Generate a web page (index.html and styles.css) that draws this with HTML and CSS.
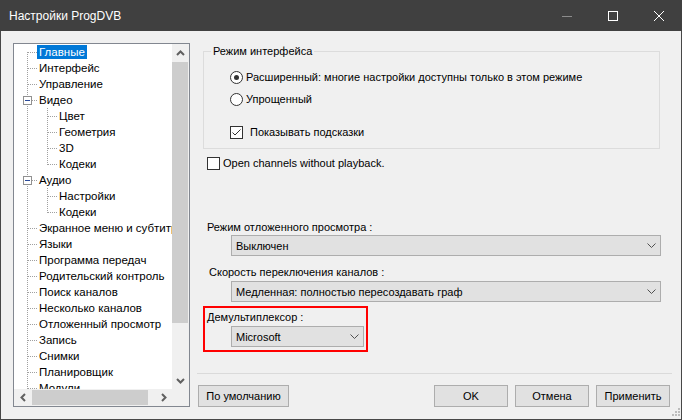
FILE: index.html
```html
<!DOCTYPE html>
<html lang="ru">
<head>
    <meta charset="UTF-8">
    <title>Настройки ProgDVB</title>
    <link rel="stylesheet" href="styles.css">
</head>
<body>
    <div class="window">
        <div class="titlebar">
            <span class="title">Настройки ProgDVB</span>
            <div class="caption-buttons">
                <span class="cap cap-min"><svg width="10" height="10" viewBox="0 0 10 10"><path d="M0 5.5H10" stroke="#8c8c8c" stroke-width="1"/></svg></span>
                <span class="cap"><svg width="10" height="10" viewBox="0 0 10 10"><rect x="0.5" y="0.5" width="9" height="9" fill="none" stroke="#fff" stroke-width="1"/></svg></span>
                <span class="cap"><svg width="10" height="10" viewBox="0 0 10 10"><path d="M0 0L10 10M10 0L0 10" stroke="#fff" stroke-width="1"/></svg></span>
            </div>
        </div>

        <div class="client">
            <div class="tree-view">
                <div class="tree-items">
                    <div class="node"><span class="c c-first"></span><span class="label selected">Главные</span></div>
                    <div class="node"><span class="c c-mid"></span><span class="label">Интерфейс</span></div>
                    <div class="node"><span class="c c-mid"></span><span class="label">Управление</span></div>
                    <div class="node"><span class="c c-mid"><span class="expander"><i></i></span></span><span class="label">Видео</span></div>
                    <div class="node"><span class="pass"></span><span class="c c-mid"></span><span class="label">Цвет</span></div>
                    <div class="node"><span class="pass"></span><span class="c c-mid"></span><span class="label">Геометрия</span></div>
                    <div class="node"><span class="pass"></span><span class="c c-mid"></span><span class="label">3D</span></div>
                    <div class="node"><span class="pass"></span><span class="c c-last"></span><span class="label">Кодеки</span></div>
                    <div class="node"><span class="c c-mid"><span class="expander"><i></i></span></span><span class="label">Аудио</span></div>
                    <div class="node"><span class="pass"></span><span class="c c-mid"></span><span class="label">Настройки</span></div>
                    <div class="node"><span class="pass"></span><span class="c c-last"></span><span class="label">Кодеки</span></div>
                    <div class="node"><span class="c c-mid"></span><span class="label">Экранное меню и субтитры</span></div>
                    <div class="node"><span class="c c-mid"></span><span class="label">Языки</span></div>
                    <div class="node"><span class="c c-mid"></span><span class="label">Программа передач</span></div>
                    <div class="node"><span class="c c-mid"></span><span class="label">Родительский контроль</span></div>
                    <div class="node"><span class="c c-mid"></span><span class="label">Поиск каналов</span></div>
                    <div class="node"><span class="c c-mid"></span><span class="label">Несколько каналов</span></div>
                    <div class="node"><span class="c c-mid"></span><span class="label">Отложенный просмотр</span></div>
                    <div class="node"><span class="c c-mid"></span><span class="label">Запись</span></div>
                    <div class="node"><span class="c c-mid"></span><span class="label">Снимки</span></div>
                    <div class="node"><span class="c c-mid"></span><span class="label">Планировщик</span></div>
                    <div class="node"><span class="c c-mid"></span><span class="label">Модули</span></div>
                </div>
                <div class="vscroll">
                    <span class="sb-btn"><svg width="9" height="6" viewBox="0 0 9 6"><path d="M1 5L4.5 1.5L8 5" fill="none" stroke="#606060" stroke-width="2"/></svg></span>
                    <div class="sb-track"><div class="v-thumb"></div></div>
                    <span class="sb-btn"><svg width="9" height="6" viewBox="0 0 9 6"><path d="M1 1L4.5 4.5L8 1" fill="none" stroke="#606060" stroke-width="2"/></svg></span>
                </div>
                <div class="hscroll">
                    <span class="sb-btn"><svg width="6" height="9" viewBox="0 0 6 9"><path d="M5 1L1.5 4.5L5 8" fill="none" stroke="#606060" stroke-width="2"/></svg></span>
                    <div class="sb-track h"><div class="h-thumb"></div></div>
                    <span class="sb-btn"><svg width="6" height="9" viewBox="0 0 6 9"><path d="M1 1L4.5 4.5L1 8" fill="none" stroke="#606060" stroke-width="2"/></svg></span>
                </div>
                <div class="corner"></div>
            </div>

            <div class="page">
                <fieldset class="group">
                    <legend>Режим интерфейса</legend>
                    <div class="option first">
                        <span class="radio checked"></span>
                        <span class="opt-text">Расширенный: многие настройки доступны только в этом режиме</span>
                    </div>
                    <div class="option second">
                        <span class="radio"></span>
                        <span class="opt-text">Упрощенный</span>
                    </div>
                    <div class="option third">
                        <span class="check checked"><svg width="11" height="11" viewBox="0 0 11 11"><path d="M1.5 5.5L4 8L9.5 2.5" fill="none" stroke="#333" stroke-width="1"/></svg></span>
                        <span class="opt-text wide">Показывать подсказки</span>
                    </div>
                </fieldset>

                <div class="option standalone">
                    <span class="check"></span>
                    <span class="opt-text">Open channels without playback.</span>
                </div>

                <div class="field-label l1">Режим отложенного просмотра :</div>
                <div class="combo long">
                    <span>Выключен</span>
                    <svg width="9" height="5" viewBox="0 0 9 5"><path d="M0.5 0.5L4.5 4.5L8.5 0.5" fill="none" stroke="#505050" stroke-width="1"/></svg>
                </div>

                <div class="field-label l2">Скорость переключения каналов :</div>
                <div class="combo long">
                    <span>Медленная: полностью пересоздавать граф</span>
                    <svg width="9" height="5" viewBox="0 0 9 5"><path d="M0.5 0.5L4.5 4.5L8.5 0.5" fill="none" stroke="#505050" stroke-width="1"/></svg>
                </div>

                <div class="highlight-box">
                    <div class="field-label">Демультиплексор :</div>
                    <div class="combo short">
                        <span>Microsoft</span>
                        <svg width="9" height="5" viewBox="0 0 9 5"><path d="M0.5 0.5L4.5 4.5L8.5 0.5" fill="none" stroke="#505050" stroke-width="1"/></svg>
                    </div>
                </div>

                <div class="separator"></div>

                <div class="button-row">
                    <button class="btn btn-default">По умолчанию</button>
                    <div class="button-group">
                        <button class="btn">OK</button>
                        <button class="btn">Отмена</button>
                        <button class="btn">Применить</button>
                    </div>
                </div>
            </div>

            <svg class="grip" width="12" height="12" viewBox="0 0 12 12">
                <rect x="9" y="1" width="2" height="2" fill="#bcbcbc"/>
                <rect x="6" y="4" width="2" height="2" fill="#bcbcbc"/>
                <rect x="9" y="4" width="2" height="2" fill="#bcbcbc"/>
                <rect x="3" y="7" width="2" height="2" fill="#bcbcbc"/>
                <rect x="6" y="7" width="2" height="2" fill="#bcbcbc"/>
                <rect x="9" y="7" width="2" height="2" fill="#bcbcbc"/>
            </svg>
        </div>
    </div>
</body>
</html>
```

FILE: styles.css
```css
body {
    margin: 0;
    font-family: 'Liberation Sans', Arial, sans-serif;
    font-size: 11px;
    color: #000;
    background-color: #f0f0f0;
}
.window {
    width: 682px;
    height: 420px;
    box-sizing: border-box;
    border: 1px solid #474747;
    border-top: none;
    display: flex;
    flex-direction: column;
    background-color: #f0f0f0;
}
.titlebar {
    height: 31px;
    flex: none;
    background-color: #404040;
    display: flex;
    align-items: center;
    justify-content: space-between;
    margin: 0 -1px;
}
.title {
    color: #fff;
    padding-left: 9px;
    font-size: 12px;
}
.caption-buttons {
    display: flex;
    height: 31px;
}
.cap {
    width: 46px;
    height: 31px;
    display: flex;
    align-items: center;
    justify-content: center;
}
.cap svg {
    display: block;
}

.client {
    flex: 1;
    display: flex;
    padding: 12px 9px 0 12px;
    position: relative;
}

/* tree */
.tree-view {
    width: 177px;
    height: 364px;
    box-sizing: border-box;
    flex: none;
    border: 1px solid #828790;
    background-color: #fff;
    display: grid;
    grid-template-columns: 158px 17px;
    grid-template-rows: 345px 17px;
}
.tree-items {
    overflow: hidden;
    white-space: nowrap;
}
.node {
    height: 16px;
    display: flex;
    align-items: center;
    padding-left: 6px;
}
.c, .pass {
    flex: none;
    height: 16px;
    background-repeat: no-repeat;
}
.c {
    width: 17px;
}
.pass {
    width: 20px;
    background-image: repeating-linear-gradient(to bottom, #a0a0a0 0 1px, transparent 1px 2px);
    background-size: 1px 16px;
    background-position: 7px 0;
}
.c-mid {
    background-image:
        repeating-linear-gradient(to bottom, #a0a0a0 0 1px, transparent 1px 2px),
        repeating-linear-gradient(to right, #a0a0a0 0 1px, transparent 1px 2px);
    background-size: 1px 16px, 9px 1px;
    background-position: 7px 0, 8px 8px;
}
.c-first {
    background-image:
        repeating-linear-gradient(to bottom, #a0a0a0 0 1px, transparent 1px 2px),
        repeating-linear-gradient(to right, #a0a0a0 0 1px, transparent 1px 2px);
    background-size: 1px 8px, 9px 1px;
    background-position: 7px 8px, 8px 8px;
}
.c-last {
    background-image:
        repeating-linear-gradient(to bottom, #a0a0a0 0 1px, transparent 1px 2px),
        repeating-linear-gradient(to right, #a0a0a0 0 1px, transparent 1px 2px);
    background-size: 1px 9px, 9px 1px;
    background-position: 7px 0, 8px 8px;
}
.expander {
    display: flex;
    align-items: center;
    justify-content: center;
    width: 9px;
    height: 9px;
    box-sizing: border-box;
    margin: 4px 0 0 3px;
    border: 1px solid #919191;
    background-color: #fff;
}
.expander i {
    display: block;
    width: 5px;
    height: 1px;
    background-color: #2a4a9a;
}
.label {
    line-height: 14px;
    padding: 0 2px;
    font-size: 11.5px;
}
.label.selected {
    background-color: #0078d7;
    color: #fff;
}

/* scrollbars */
.vscroll, .hscroll {
    background-color: #f0f0f0;
    display: flex;
}
.vscroll {
    flex-direction: column;
}
.sb-btn {
    width: 17px;
    height: 17px;
    flex: none;
    display: flex;
    align-items: center;
    justify-content: center;
}
.sb-track {
    flex: 1;
}
.v-thumb {
    height: 261px;
    margin: 1px 1px 0 0;
    background-color: #cdcdcd;
}
.h-thumb {
    width: 116px;
    height: 15px;
    margin: 1px 0 0 1px;
    background-color: #cdcdcd;
}
.corner {
    background-color: #f0f0f0;
}

/* right page */
.page {
    width: 475px;
    margin-left: 7px;
    display: flex;
    flex-direction: column;
}
.group {
    margin: 0 0 0 6px;
    width: 457px;
    box-sizing: border-box;
    border: 1px solid #dcdcdc;
    padding: 0 0 8px 26px;
    min-inline-size: 0;
}
.group legend {
    padding: 0 2px;
    margin-left: -19px;
    line-height: 16px;
}
.option {
    height: 16px;
    display: flex;
    align-items: center;
}
.option.first {
    margin-top: 10px;
}
.option.second {
    margin-top: 6px;
}
.option.third {
    margin-top: 17px;
}
.option.standalone {
    margin: 6px 0 0 10px;
}
.radio, .check {
    flex: none;
    width: 13px;
    height: 13px;
    box-sizing: border-box;
    border: 1px solid #333;
    background-color: #fff;
    display: flex;
    align-items: center;
    justify-content: center;
}
.radio {
    border-radius: 50%;
}
.radio.checked::after {
    content: "";
    width: 5px;
    height: 5px;
    border-radius: 50%;
    background-color: #333;
}
.opt-text {
    margin-left: 3px;
}
.opt-text.wide {
    margin-left: 7px;
}

.field-label {
    line-height: 16px;
}
.field-label.l1 {
    margin: 48px 0 0 10px;
}
.field-label.l2 {
    margin: 8px 0 0 12px;
}
.combo {
    height: 21px;
    box-sizing: border-box;
    border: 1px solid #adadad;
    background-color: #e1e1e1;
    display: flex;
    align-items: center;
    justify-content: space-between;
    padding: 0 4px 0 4px;
    margin-left: 34px;
}
.combo svg {
    display: block;
}
.combo.long {
    width: 430px;
}
.combo.long + .field-label {
    margin-top: 8px;
}
.field-label.l2 + .combo {
    margin-top: 1px;
}
.highlight-box {
    margin: 4px 0 0 6px;
    width: 165px;
    box-sizing: border-box;
    border: 2px solid #ff0000;
    padding: 1px 0 3px 2px;
}
.highlight-box .combo {
    margin: 1px 0 0 24px;
    width: 133px;
}
.separator {
    height: 1px;
    margin-top: 21px;
    background-color: #dadada;
}
.button-row {
    display: flex;
    justify-content: space-between;
    margin-top: 11px;
    padding: 0 2px 0 1px;
}
.button-group {
    display: flex;
    gap: 7px;
}
.btn {
    height: 22px;
    width: 74px;
    box-sizing: border-box;
    border: 1px solid #adadad;
    background-color: #e1e1e1;
    font-family: 'Liberation Sans', Arial, sans-serif;
    font-size: 11px;
    color: #000;
    padding: 0;
}
.btn-default {
    width: 91px;
}
.grip {
    position: absolute;
    right: 0;
    bottom: 0;
}
```
